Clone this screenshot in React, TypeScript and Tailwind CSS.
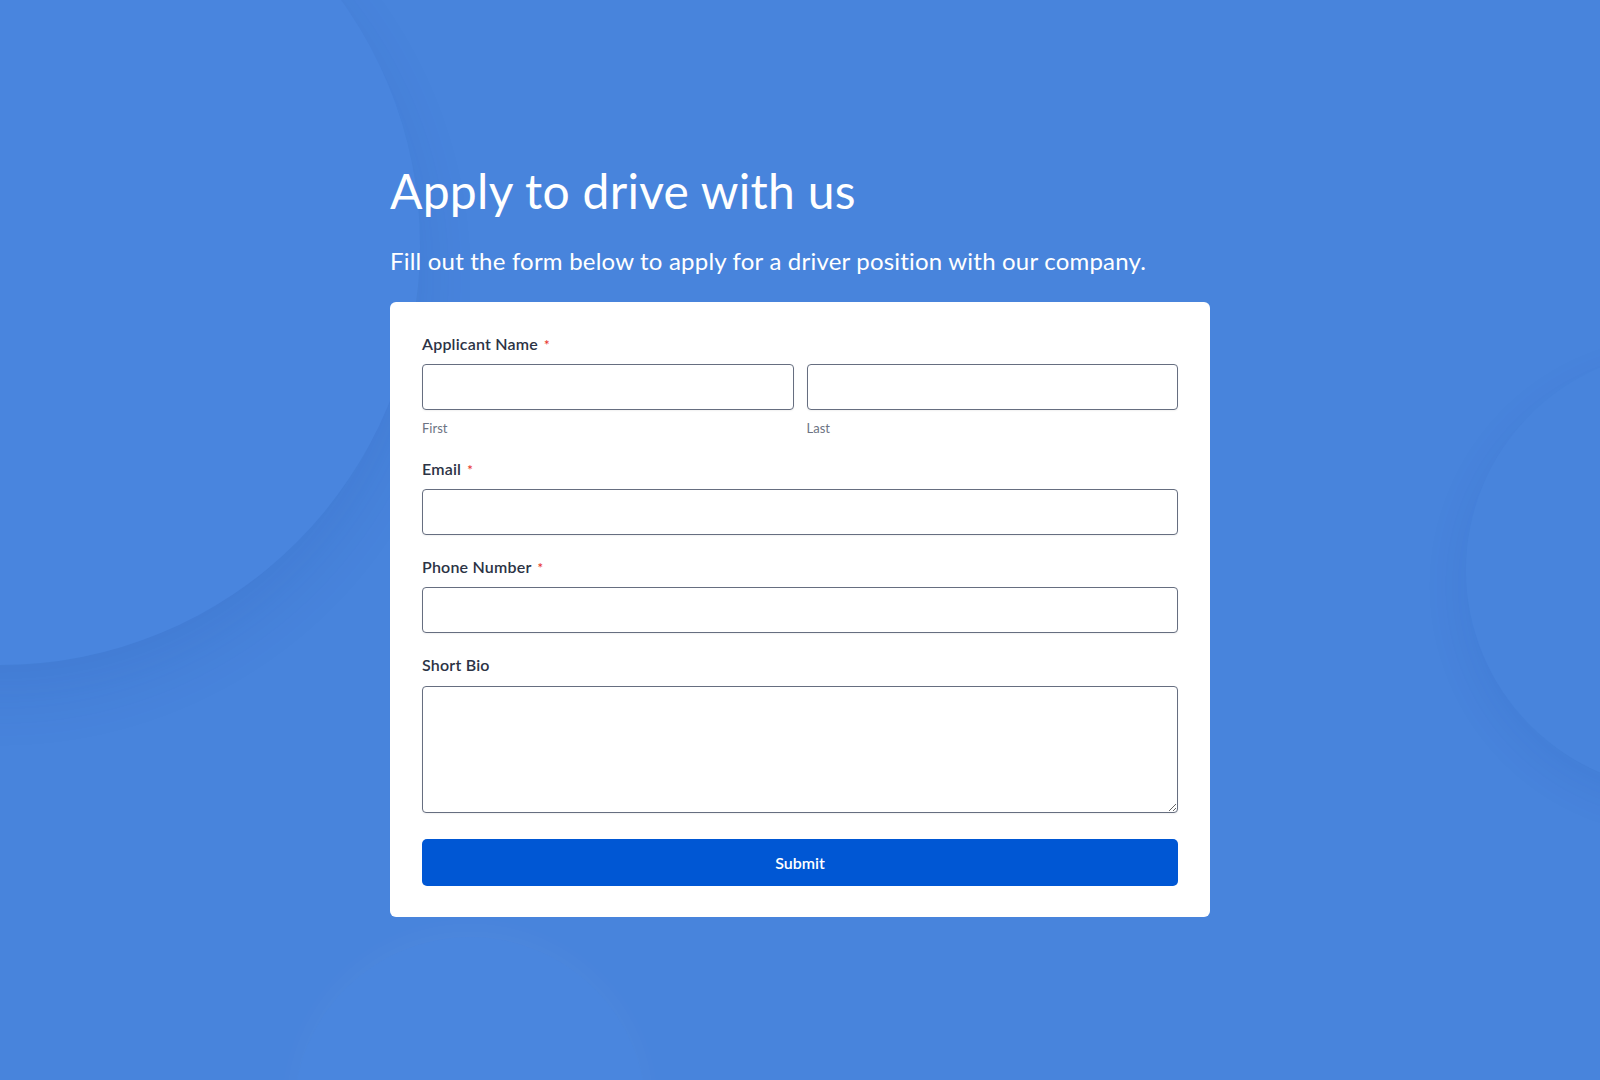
import React from "react";

const font = { fontFamily: "Lato, 'Open Sans', sans-serif" };

function Label({ text, required }: { text: string; required?: boolean }) {
  return (
    <label className="flex items-center text-[16px] leading-5 font-semibold tracking-[0.2px] text-[#2c3345]">
      <span>{text}</span>
      {required && <span className="ml-[6px] mt-[2px] text-[13px] leading-4 text-[#e8392f]">*</span>}
    </label>
  );
}

const inputClass =
  "block w-full h-[46px] rounded-[4px] border border-[#666e80] bg-white px-3 text-[15px] text-[#2c3345] shadow-[0_1px_2px_rgba(0,0,0,0.06)] outline-none";

export default function App() {
  return (
    <div className="relative min-h-screen overflow-hidden bg-[#4884dc]" style={font}>
      {/* background shapes */}
      <div className="pointer-events-none absolute left-[-420px] top-[-175px] h-[840px] w-[840px] rounded-full bg-[#4985de] shadow-[0_30px_60px_rgba(20,60,150,0.1)]" />
      <div className="pointer-events-none absolute left-[1466px] top-[350px] h-[440px] w-[440px] rounded-full bg-[#4884dc] shadow-[-6px_16px_40px_rgba(20,60,150,0.07)]" />
      <div className="pointer-events-none absolute left-[294px] top-[937px] h-[352px] w-[352px] rounded-full bg-[#4a86de] shadow-[0_-6px_30px_rgba(255,255,255,0.04)]" />

      <div className="relative mx-auto w-[820px] pt-[162px] pb-20">
        <h1 className="text-[48px] leading-[58px] font-normal tracking-[0.28px] text-white">Apply to drive with us</h1>
        <p className="mt-[25px] text-[24px] leading-8 font-normal tracking-[0.2px] text-white">
          Fill out the form below to apply for a driver position with our company.
        </p>

        <form className="mt-[25px] rounded-md bg-white px-8 pt-8 pb-[31px]">
          <Label text="Applicant Name" required />
          <div className="mt-[10px] grid grid-cols-2 gap-[13px]">
            <div>
              <input className={inputClass} />
              <div className="mt-[10px] text-[13px] leading-4 text-[#6c7383]">First</div>
            </div>
            <div>
              <input className={inputClass} />
              <div className="mt-[10px] text-[13px] leading-4 text-[#6c7383]">Last</div>
            </div>
          </div>

          <div className="mt-[23px]">
            <Label text="Email" required />
            <input className={`mt-[10px] ${inputClass}`} />
          </div>

          <div className="mt-[22px]">
            <Label text="Phone Number" required />
            <input className={`mt-[10px] ${inputClass}`} />
          </div>

          <div className="mt-[22px]">
            <Label text="Short Bio" />
            <textarea className="mt-[11px] block h-[127px] w-full rounded-[4px] border border-[#666e80] bg-white px-3 py-2 text-[15px] text-[#2c3345] shadow-[0_1px_2px_rgba(0,0,0,0.06)] outline-none" />
          </div>

          <button
            type="button"
            className="mt-[26px] flex h-[47px] w-full items-center justify-center rounded-[5px] bg-[#0057d4] text-[16px] font-semibold text-white"
          >
            Submit
          </button>
        </form>
      </div>
    </div>
  );
}
